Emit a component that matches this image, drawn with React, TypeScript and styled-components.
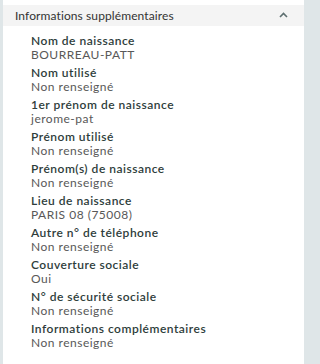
import React from "react";
import styled, { createGlobalStyle } from "styled-components";

const fields: { label: string; value: string }[] = [
  { label: "Nom de naissance", value: "BOURREAU-PATT" },
  { label: "Nom utilisé", value: "Non renseigné" },
  { label: "1er prénom de naissance", value: "jerome-pat" },
  { label: "Prénom utilisé", value: "Non renseigné" },
  { label: "Prénom(s) de naissance", value: "Non renseigné" },
  { label: "Lieu de naissance", value: "PARIS 08 (75008)" },
  { label: "Autre n° de téléphone", value: "Non renseigné" },
  { label: "Couverture sociale", value: "Oui" },
  { label: "N° de sécurité sociale", value: "Non renseigné" },
  { label: "Informations complémentaires", value: "Non renseigné" },
];

export default function App() {
  return (
    <>
      <Global />
      <Page>
        <Panel>
          <Header>
            <HeaderTitle>Informations supplémentaires</HeaderTitle>
            <Chevron width="9" height="6" viewBox="0 0 9 6" aria-hidden>
              <path d="M1 5 L4.5 1.5 L8 5" fill="none" stroke="#5d6f70" strokeWidth="1.6" />
            </Chevron>
          </Header>
          <List>
            {fields.map((f) => (
              <Item key={f.label}>
                <Label>{f.label}</Label>
                <Value>{f.value}</Value>
              </Item>
            ))}
          </List>
        </Panel>
      </Page>
    </>
  );
}

/* ===== styled ===== */
const Global = createGlobalStyle`
  html, body { margin: 0; padding: 0; }
  body { font-family: Lato, "Open Sans", sans-serif; background: #dfe6e8; }
`;

const Page = styled.div`
  width: 315px; height: 364px; box-sizing: border-box;
  padding: 0 11px 0 3px; background: #dfe6e8;
`;

const Panel = styled.div`
  height: 100%; background: #fff; padding-top: 5px; box-sizing: border-box;
`;

const Header = styled.div`
  height: 21px; background: #f4f4f4; display: flex; align-items: center;
  justify-content: space-between; padding: 0 16px 1px 12px; box-sizing: border-box;
`;
const HeaderTitle = styled.span`font-size: 12px; letter-spacing: 0.1px; color: #333;`;
const Chevron = styled.svg`display: block;`;

const List = styled.div`padding: 8px 0 0 28px; display: flex; flex-direction: column; gap: 4px;`;
const Item = styled.div`display: flex; flex-direction: column;`;
const Label = styled.div`
  font-size: 12px; line-height: 14px; letter-spacing: 0.5px; font-weight: 600; color: #2e3d3b;
`;
const Value = styled.div`font-size: 12px; line-height: 14px; letter-spacing: 0.5px; color: #585858;`;
